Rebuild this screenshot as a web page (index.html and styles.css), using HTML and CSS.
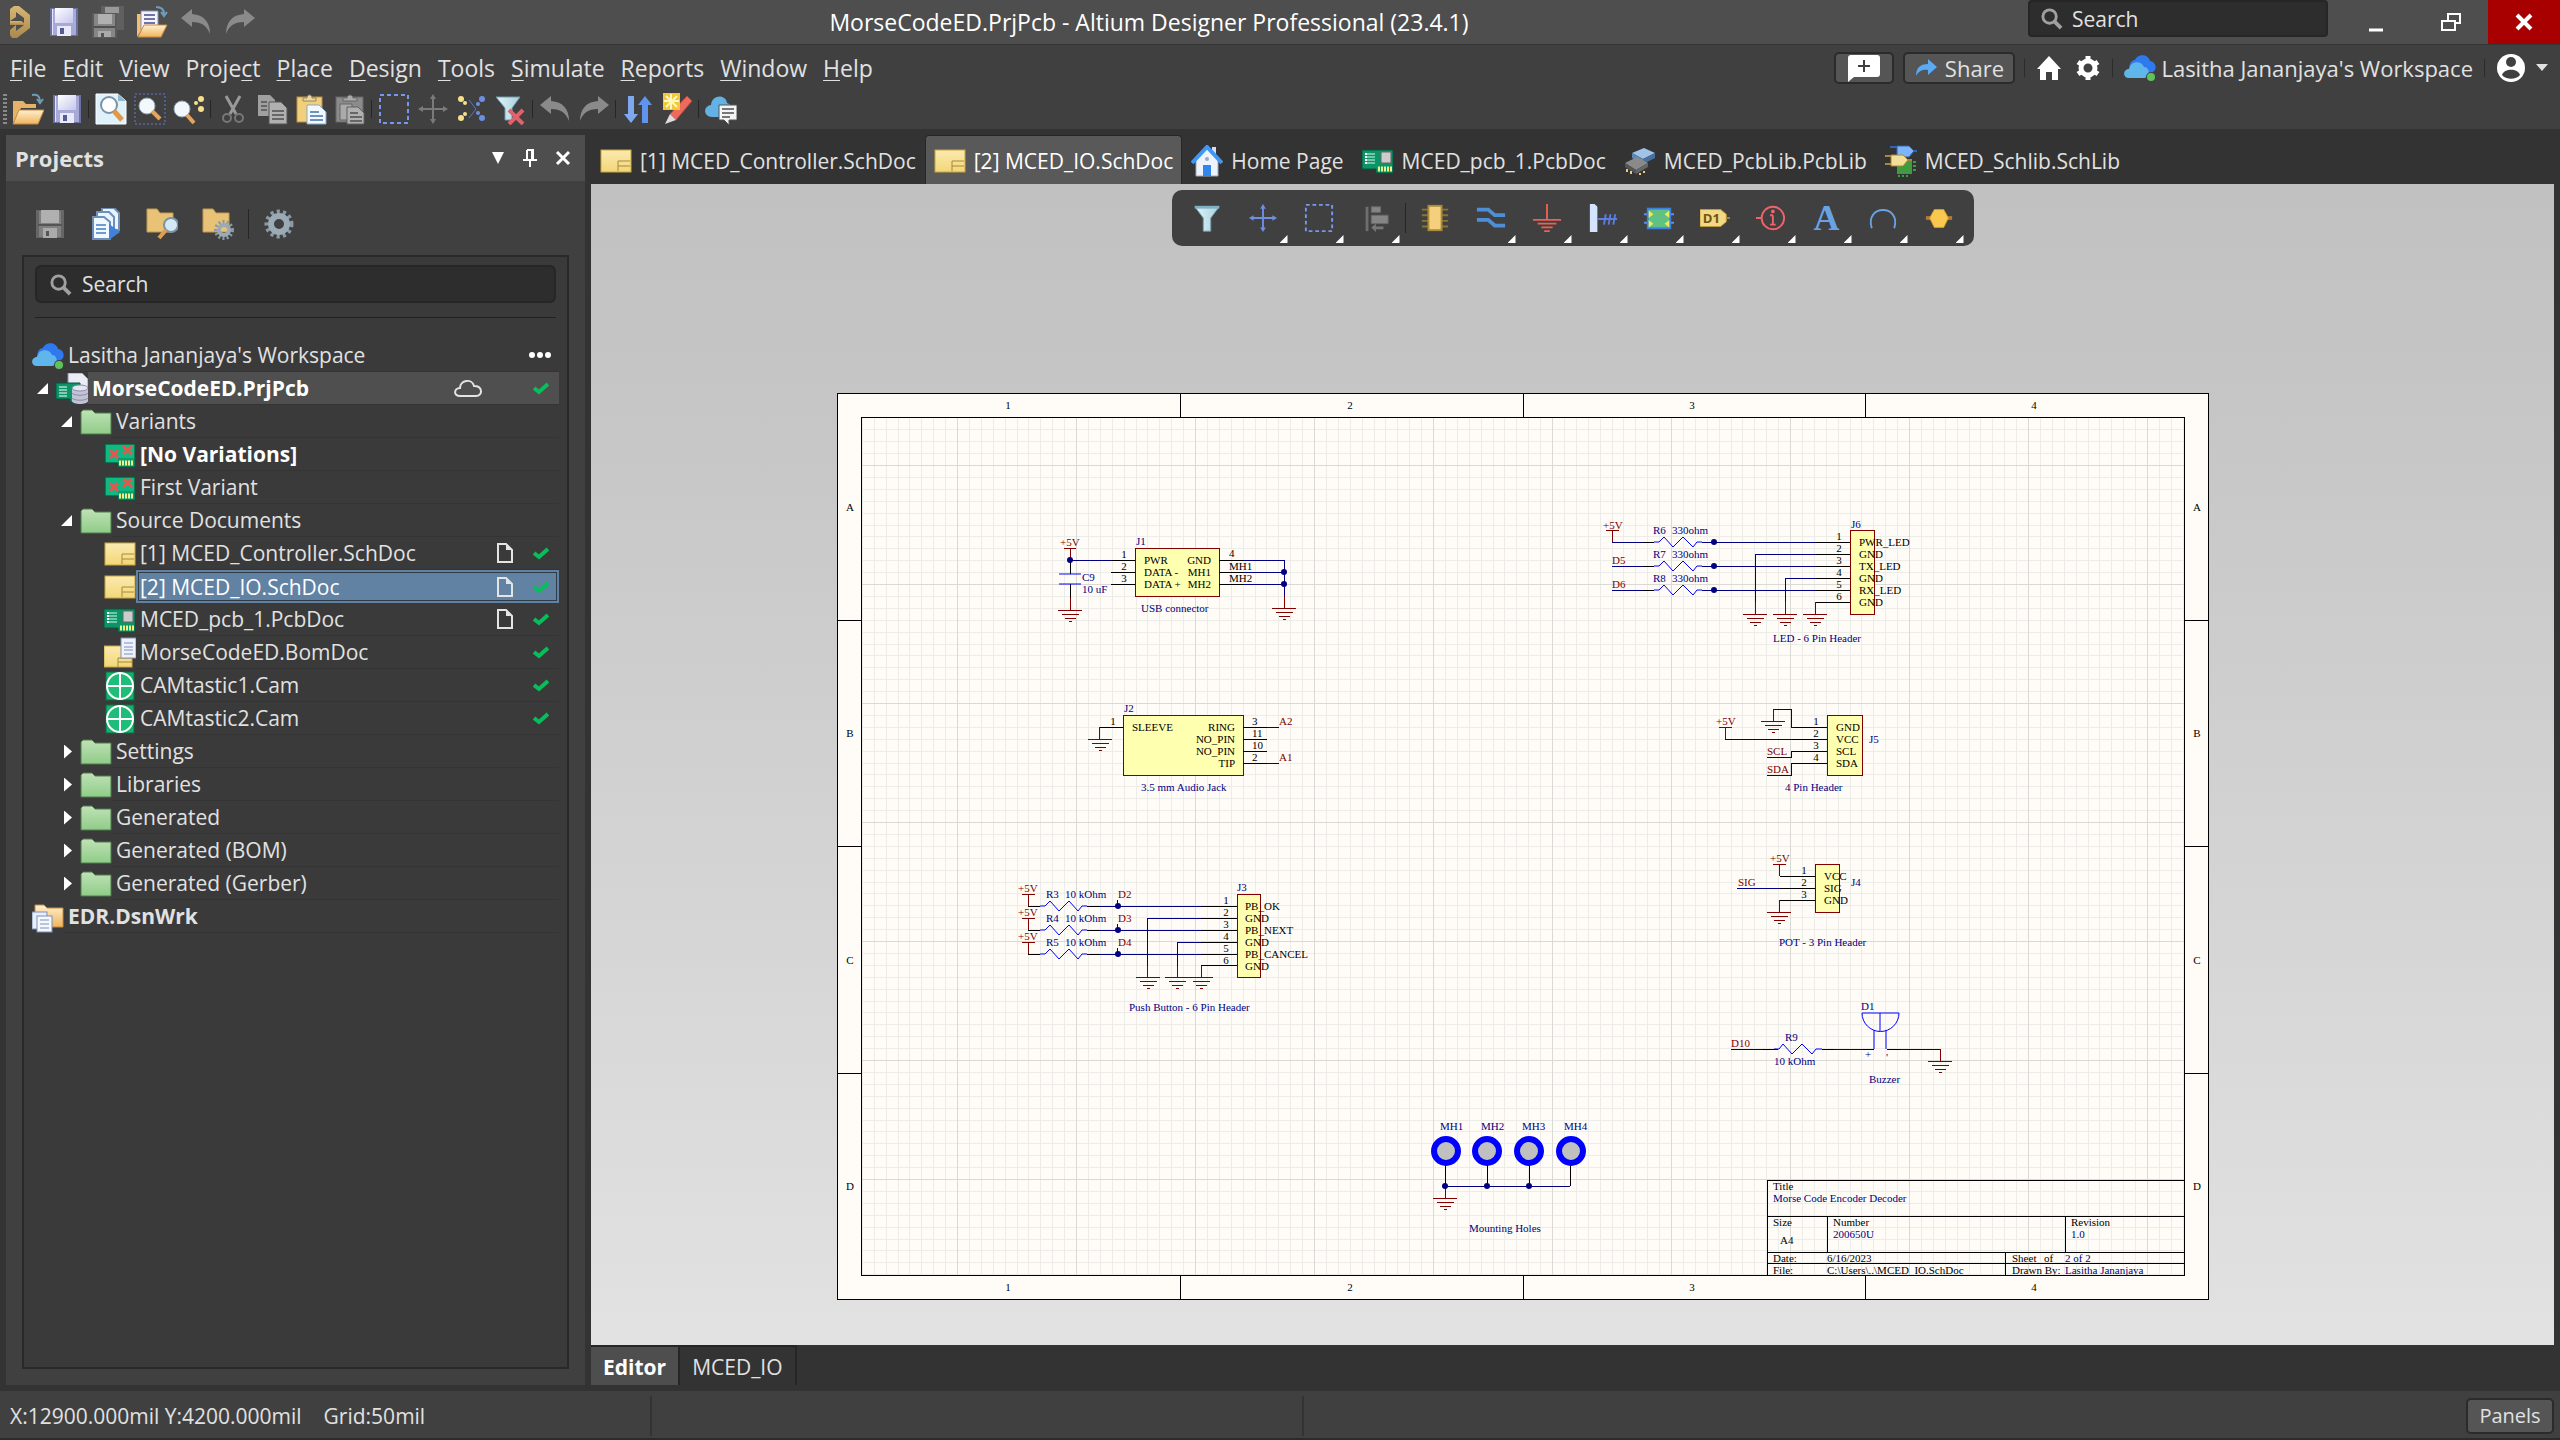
FILE: index.html
```html
<!DOCTYPE html>
<html lang="en">
<head>
<meta charset="utf-8">
<title>MorseCodeED.PrjPcb - Altium Designer Professional (23.4.1)</title>
<link rel="stylesheet" href="styles.css">
</head>
<body>
<svg class="defs" aria-hidden="true">
  <defs>
    <linearGradient id="gold" x1="0" y1="0" x2="0" y2="1"><stop offset="0" stop-color="#fff0cf"/><stop offset="1" stop-color="#f0b45e"/></linearGradient>
    <linearGradient id="note" x1="0" y1="0" x2="0" y2="1"><stop offset="0" stop-color="#fbeab0"/><stop offset="1" stop-color="#f2d777"/></linearGradient>
    <linearGradient id="leaf" x1="0" y1="0" x2="0" y2="1"><stop offset="0" stop-color="#c0e2b6"/><stop offset="1" stop-color="#8fcc88"/></linearGradient>
    <linearGradient id="lilac" x1="0" y1="0" x2="1" y2="1"><stop offset="0" stop-color="#ffffff"/><stop offset="1" stop-color="#c6c6ee"/></linearGradient>
    <linearGradient id="ice" x1="0" y1="0" x2="1" y2="0"><stop offset="0" stop-color="#dff3f8"/><stop offset="1" stop-color="#a8d2de"/></linearGradient>
    <linearGradient id="brass" x1="0" y1="0" x2="0" y2="1"><stop offset="0" stop-color="#d8b774"/><stop offset="1" stop-color="#a98a4c"/></linearGradient>
  </defs>
  <symbol id="i-logo" viewBox="0 0 32 32"><path d="M10 0 L15 0 L26 9 V22 L13 32 H8 L6 29 V24 L12 19 V25 L20 19 V12 L12 6 V11 L6 15 V3Z" fill="url(#brass)"/><path d="M6 15 H17 L20 17 V19 H6Z" fill="url(#brass)"/></symbol>
  <symbol id="i-save" viewBox="0 0 32 32"><path d="M2 2H30V30H2Z" fill="#6a70a0"/><path d="M4 3H28V29H4Z" fill="#a7aad6"/><rect x="7" y="2" width="18" height="15" fill="url(#lilac)"/><rect x="4" y="3" width="1" height="26" fill="#e4e4fa"/><rect x="9" y="20" width="14" height="10" fill="#e9e9fb"/><rect x="12" y="22" width="4" height="6" fill="#555c90"/></symbol>
  <symbol id="i-save-grey" viewBox="0 0 32 32"><path d="M2 2H30V30H2Z" fill="#666"/><path d="M5 3H27V29H5Z" fill="#808080"/><rect x="7" y="2" width="18" height="13" fill="#b0b0b0"/><rect x="4" y="16" width="24" height="2" fill="#555"/><rect x="9" y="20" width="14" height="10" fill="#aaa"/><rect x="12" y="23" width="3" height="5" fill="#555"/></symbol>
  <symbol id="i-save-all" viewBox="0 0 32 32"><path d="M9 0H32V24H9Z" fill="#606060"/><rect x="13" y="1" width="14" height="6" fill="#999"/><path d="M0 7H25V32H0Z" fill="#5a5a5a"/><path d="M2 8H23V31H2Z" fill="#868686"/><rect x="6" y="8" width="14" height="10" fill="#b0b0b0"/><rect x="2" y="20" width="21" height="2" fill="#505050"/><rect x="6" y="25" width="13" height="6" fill="#aaa"/><rect x="9" y="27" width="3" height="4" fill="#555"/></symbol>
  <symbol id="i-open" viewBox="0 0 32 32"><path d="M1 8H11L14 11H24V15H9L1 30Z" fill="#e6b26a"/><path d="M7 17H32L26 31H1Z" fill="url(#gold)" stroke="#c78a3e"/><path d="M20 2C25 1 28 3 28 8M25 6L28 10L31 6" fill="none" stroke="#6f9dbb" stroke-width="2"/></symbol>
  <symbol id="i-open-doc" viewBox="0 0 32 32"><path d="M1 8H8V20L1 31Z" fill="#f0c070"/><path d="M5 5H22V24H5Z" fill="#f4f4ff" stroke="#8c8fb5"/><path d="M8 9H19M8 13H19M8 17H19" stroke="#6f74a8" stroke-width="2"/><path d="M8 19H31L25 31H2Z" fill="url(#gold)" stroke="#c78a3e"/><path d="M20 1C25 1 28 3 28 8M25 6L28 10L31 6" fill="none" stroke="#6f9dbb" stroke-width="2"/></symbol>
  <symbol id="i-undo" viewBox="0 0 32 32"><path d="M1 12L12 3V8C24 9 30 16 30 28C27 20 22 16 12 16V21Z" fill="#8a8a8a"/></symbol>
  <symbol id="i-redo" viewBox="0 0 32 32"><path d="M31 12L20 3V8C8 9 2 16 2 28C5 20 10 16 20 16V21Z" fill="#8a8a8a"/></symbol>
  <symbol id="i-zoomdoc" viewBox="0 0 32 32"><path d="M1 1H23L31 8V31H1Z" fill="#dff2fb" stroke="#fff"/><path d="M23 1V8H31Z" fill="#8fb8cc"/><circle cx="14" cy="12" r="8" fill="#fff" stroke="#7a93a6" stroke-width="2"/><path d="M19 18L27 27" stroke="#e0994a" stroke-width="5"/></symbol>
  <symbol id="i-zoomarea" viewBox="0 0 32 32"><rect x="1" y="1" width="30" height="30" fill="none" stroke="#5f78d8" stroke-dasharray="2 2"/><circle cx="13" cy="13" r="8" fill="#f3f8fc" stroke="#8fa6b5"/><path d="M18 18L26 26" stroke="#e6a45a" stroke-width="4"/></symbol>
  <symbol id="i-zoomsel" viewBox="0 0 32 32"><circle cx="9" cy="16" r="8" fill="#f3f8fc" stroke="#8fa6b5"/><path d="M14 22L21 30" stroke="#e6a45a" stroke-width="4"/><g fill="#f6e08a"><circle cx="28" cy="6" r="3"/><circle cx="23" cy="10" r="2"/><circle cx="28" cy="16" r="3"/></g></symbol>
  <symbol id="i-cut" viewBox="0 0 32 32"><path d="M9 3L19 21M23 3L13 21" stroke="#999" stroke-width="3"/><circle cx="10" cy="25" r="4" fill="none" stroke="#777" stroke-width="2"/><circle cx="22" cy="25" r="4" fill="none" stroke="#777" stroke-width="2"/></symbol>
  <symbol id="i-copy" viewBox="0 0 32 32"><path d="M2 2H14L19 7V23H2Z" fill="#a0a0a0"/><path d="M13 9H25L31 15V31H13Z" fill="#b0b0b0" stroke="#555"/><path d="M5 9H11M5 13H11M5 17H11M16 18H28M16 22H28M16 26H28" stroke="#666" stroke-width="2"/></symbol>
  <symbol id="i-paste" viewBox="0 0 32 32"><rect x="2" y="4" width="25" height="25" fill="#f2cf7a" stroke="#b98f45"/><path d="M8 8V5H12C12 1 17 1 17 5H21V8Z" fill="#ead9a6" stroke="#9a8450"/><path d="M12 12H24L31 19V31H12Z" fill="#f2f8ff" stroke="#89a7c6"/><path d="M15 19H24M15 23H28M15 27H28" stroke="#6c92bd" stroke-width="2"/></symbol>
  <symbol id="i-paste-grey" viewBox="0 0 32 32"><rect x="2" y="4" width="27" height="25" fill="#8b8b8b" stroke="#666"/><path d="M9 8V5H13C13 1 19 1 19 5H23V8Z" fill="#aaa" stroke="#666"/><path d="M6 11H18V27H6Z" fill="#aaa" stroke="#666"/><path d="M13 14H24L30 20V31H13Z" fill="#b0b0b0" stroke="#606060"/><path d="M16 20H24M16 24H28M16 28H28" stroke="#666" stroke-width="2"/></symbol>
  <symbol id="i-select" viewBox="0 0 32 32"><rect x="2" y="2" width="28" height="28" fill="none" stroke="#7797ee" stroke-width="2" stroke-dasharray="4 3"/></symbol>
  <symbol id="i-move" viewBox="0 0 32 32"><path d="M16 4V28M4 16H28" stroke="currentColor" stroke-width="2"/><path d="M16 1L19 6H13ZM16 31L19 26H13ZM1 16L6 13V19ZM31 16L26 13V19Z" fill="currentColor"/></symbol>
  <symbol id="i-dots" viewBox="0 0 32 32"><g fill="#f6e08a"><circle cx="5" cy="6" r="3"/><circle cx="9" cy="10" r="2"/><circle cx="5" cy="25" r="3"/><circle cx="9" cy="21" r="2"/></g><g fill="#6c8fe0"><circle cx="26" cy="6" r="3"/><circle cx="22" cy="11" r="2"/><circle cx="26" cy="25" r="3"/><circle cx="22" cy="20" r="2"/></g><path d="M13 7L20 16L13 25" fill="none" stroke="#5573c8"/></symbol>
  <symbol id="i-filter" viewBox="0 0 32 32"><path d="M3 4H29L20 16V30H12V16Z" fill="url(#ice)" stroke="#6f9bad"/><rect x="3" y="3" width="26" height="3" fill="#7fb0c6"/></symbol>
  <symbol id="i-filter-clear" viewBox="0 0 32 32"><path d="M1 4H25L17 15V27H10V15Z" fill="url(#ice)" stroke="#6f9bad"/><path d="M14 17L28 31M28 17L14 31" stroke="#e0626a" stroke-width="4"/></symbol>
  <symbol id="i-arrows" viewBox="0 0 32 32"><path d="M6 3H12V21H16L9 30L2 21H6Z" fill="#7fa9ef"/><path d="M20 30H26V12H30L23 3L16 12H20Z" fill="#5f93ee"/></symbol>
  <symbol id="i-pen" viewBox="0 0 32 32"><path d="M26 3L31 8L15 27L9 21Z" fill="#ee6a5c" stroke="#b8443c"/><path d="M9 21L15 27L4 31Z" fill="#ddd"/><rect x="2" y="0" width="17" height="17" fill="#f0c83a"/><path d="M10 1V16M3 8H18M5 3L16 14M16 3L5 14" stroke="#fff6c0" stroke-width="2"/></symbol>
  <symbol id="i-cloudnote" viewBox="0 0 32 32"><path d="M7 24C-2 24-2 13 6 12C7 1 21 1 22 10C29 12 29 24 20 24Z" fill="#63b1e5"/><path d="M14 12H32V27H24V32L19 27H14Z" fill="#f4f4f4" stroke="#555"/><path d="M17 16H29M17 20H29M17 24H25" stroke="#777" stroke-width="2"/></symbol>
  <symbol id="i-cloud" viewBox="0 0 32 32"><path d="M6 18C4 12 8 8 11 8C13 2 24 1 26 9C30 9 33 14 31 18L27 22H8Z" fill="#2f79ee"/><path d="M5 26C-2 26-1 17 5 17C7 8 18 9 20 15C26 15 27 26 20 26Z" fill="#5fb6ea"/><circle cx="27" cy="25" r="5" fill="#404040"/><circle cx="27" cy="25" r="4" fill="#5ec45a"/></symbol>
  <symbol id="i-search" viewBox="0 0 24 24"><circle cx="10" cy="10" r="7" fill="none" stroke="#a0a0a0" stroke-width="3"/><path d="M15 15L22 22" stroke="#a0a0a0" stroke-width="4"/></symbol>
  <symbol id="i-folder" viewBox="0 0 32 32"><path d="M1 6L3 4H12L15 7H31V28H1Z" fill="url(#leaf)" stroke="#4f7a4c"/></symbol>
  <symbol id="i-sch" viewBox="0 0 32 32"><rect x="1" y="5" width="30" height="22" fill="url(#note)" stroke="#c9a640"/><path d="M30 16H18V26M18 21H30" fill="none" stroke="#a8883a"/></symbol>
  <symbol id="i-variant" viewBox="0 0 32 32"><path d="M1 5H31V28H14V24H1Z" fill="#0b9d6c" stroke="#06573c"/><path d="M2 6H30V19H14V23H2Z" fill="#10b883"/><path d="M15 24H30" stroke="#eef08a" stroke-width="5" stroke-dasharray="2 1"/><path d="M6 11L14 19M14 11L6 19M19 7L28 15M28 7L19 15" stroke="#e8554c" stroke-width="3"/></symbol>
  <symbol id="i-pcb" viewBox="0 0 32 32"><path d="M0 5H31V28H14V24H0Z" fill="#0a9467" stroke="#04563c"/><path d="M4 9H13M4 12H13M4 15H13M4 18H13" stroke="#d8fbe9"/><path d="M4 8V20" stroke="#fff" stroke-width="2" stroke-dasharray="2 1"/><rect x="19" y="7" width="10" height="11" fill="#ccc" stroke="#666"/><path d="M16 24H30" stroke="#eef08a" stroke-width="5" stroke-dasharray="2 1"/></symbol>
  <symbol id="i-project" viewBox="0 0 32 32"><path d="M12 0H26L32 6V18H12Z" fill="#ececf6" stroke="#8c8fb5"/><path d="M0 10H24V29H14V26H0Z" fill="#0a9467" stroke="#04563c"/><path d="M3 14H11M3 17H11M3 20H11M3 23H11" stroke="#fff"/><path d="M16 16V28C16 32 32 32 32 28V16Z" fill="#c3c3d6"/><ellipse cx="24" cy="15" rx="8" ry="3" fill="#e6e6f2" stroke="#8c8cab"/><path d="M16 20C18 23 30 23 32 20M16 25C18 28 30 28 32 25" fill="none" stroke="#8c8cab"/></symbol>
  <symbol id="i-bom" viewBox="0 0 32 32"><rect x="0" y="9" width="28" height="21" fill="url(#note)" stroke="#c9a640"/><path d="M28 21H14V30M14 25H28" fill="none" stroke="#a8883a"/><rect x="17" y="1" width="15" height="20" fill="#eef2fb" stroke="#8790b0"/><path d="M20 6H29M20 10H29M20 13H29M20 17H29" stroke="#7f8fc0"/></symbol>
  <symbol id="i-cam" viewBox="0 0 32 32"><rect x="2" y="2" width="28" height="28" fill="#15b06c" stroke="#0b6e43"/><circle cx="16" cy="16" r="13" fill="#1fbd79" stroke="#fff" stroke-width="2"/><path d="M16 3V29M3 16H29" stroke="#fff" stroke-width="2"/></symbol>
  <symbol id="i-workspace" viewBox="0 0 32 32"><path d="M3 4H12L15 7H31V26H3Z" fill="url(#gold)" stroke="#c78a3e"/><rect x="0" y="11" width="15" height="17" fill="#e8eefb" stroke="#7d8fb5"/><rect x="5" y="15" width="15" height="16" fill="#f4f8ff" stroke="#7d8fb5"/><path d="M8 19H17M8 23H17M8 27H17" stroke="#7f8fc0"/></symbol>
  <symbol id="i-check" viewBox="0 0 16 16"><path d="M1 8L6 12L15 4" fill="none" stroke="#06bf5a" stroke-width="4"/></symbol>
  <symbol id="i-page" viewBox="0 0 16 20"><path d="M1 1H9L15 7V19H1Z" fill="none" stroke="#e4e4e4" stroke-width="2"/><path d="M9 1V7H15Z" fill="#e4e4e4"/></symbol>
  <symbol id="i-gear" viewBox="0 0 32 32"><circle cx="16" cy="16" r="12" fill="none" stroke="#8b9aa4" stroke-width="5" stroke-dasharray="3 3"/><circle cx="16" cy="16" r="8" fill="none" stroke="#9aabb5" stroke-width="6"/></symbol>
</svg>

<header class="titlebar">
  <div class="quick">
    <svg class="ico"><use href="#i-logo"/></svg>
    <button class="tool" aria-label="Save"><svg class="ico"><use href="#i-save"/></svg></button>
    <button class="tool" aria-label="Save all"><svg class="ico"><use href="#i-save-all"/></svg></button>
    <button class="tool" aria-label="Open project"><svg class="ico"><use href="#i-open-doc"/></svg></button>
    <button class="tool" aria-label="Undo"><svg class="ico"><use href="#i-undo"/></svg></button>
    <button class="tool" aria-label="Redo"><svg class="ico"><use href="#i-redo"/></svg></button>
  </div>
  <h1 class="app-title">MorseCodeED.PrjPcb - Altium Designer Professional (23.4.1)</h1>
  <div class="window-side">
    <label class="search search-top"><svg class="search-ico"><use href="#i-search"/></svg><input type="text" placeholder="Search" aria-label="Search"></label>
    <div class="window-buttons">
      <button class="win" aria-label="Minimize"><svg width="20" height="20" viewBox="0 0 20 20"><path d="M3 18H17" stroke="#fff" stroke-width="3"/></svg></button>
      <button class="win" aria-label="Restore"><svg width="20" height="20" viewBox="0 0 20 20"><path d="M7 8V2H19V11H14M1 9H14V18H1Z" fill="none" stroke="#fff" stroke-width="2"/></svg></button>
      <button class="win win-close" aria-label="Close"><svg width="20" height="20" viewBox="0 0 20 20"><path d="M3 3L17 17M17 3L3 17" stroke="#fff" stroke-width="4"/></svg></button>
    </div>
  </div>
</header>

<div class="menurow">
  <nav class="menu">
    <a href="#"><u>F</u>ile</a><a href="#"><u>E</u>dit</a><a href="#"><u>V</u>iew</a><a href="#">Proje<u>c</u>t</a><a href="#"><u>P</u>lace</a><a href="#"><u>D</u>esign</a><a href="#"><u>T</u>ools</a><a href="#"><u>S</u>imulate</a><a href="#"><u>R</u>eports</a><a href="#"><u>W</u>indow</a><a href="#"><u>H</u>elp</a>
  </nav>
  <div class="account">
    <button class="raised comment" aria-label="Comment"><svg width="34" height="28" viewBox="0 0 34 28"><path d="M4 1H30Q33 1 33 4V20Q33 23 30 23H7L1 28V4Q1 1 4 1Z" fill="#fff"/><path d="M17 6V18M11 12H23" stroke="#404040" stroke-width="2"/></svg></button>
    <button class="raised share"><svg width="22" height="20" viewBox="0 0 22 20"><path d="M13 1L22 9L13 17V12C7 11 4 13 1 18C1 10 5 6 13 6Z" fill="#5aaaf6"/></svg>Share</button>
    <span class="vline"></span>
    <button class="plain" aria-label="Home"><svg width="26" height="26" viewBox="0 0 26 26"><path d="M13 1L25 14H22V25H16V17H10V25H4V14H1Z" fill="#fff"/></svg></button>
    <button class="plain" aria-label="Settings"><svg width="26" height="26" viewBox="0 0 26 26"><circle cx="13" cy="13" r="7" fill="none" stroke="#fff" stroke-width="5"/><path d="M13 1V5M13 21V25M3 7L6 9M20 17L23 19M23 7L20 9M6 17L3 19" stroke="#fff" stroke-width="5"/></svg></button>
    <span class="vline"></span>
    <button class="plain space"><svg class="ico"><use href="#i-cloud"/></svg>Lasitha Jananjaya's Workspace</button>
    <span class="vline"></span>
    <button class="plain user" aria-label="Account"><svg width="30" height="30" viewBox="0 0 30 30"><circle cx="15" cy="15" r="14" fill="#fff"/><circle cx="15" cy="9" r="5" fill="#404040"/><path d="M6 22C8 15 22 15 24 22C20 27 10 27 6 22Z" fill="#404040"/></svg><span class="caret"></span></button>
  </div>
</div>

<div class="toolbar">
  <button class="tool" aria-label="Open"><svg class="ico"><use href="#i-open"/></svg></button>
  <button class="tool" aria-label="Save"><svg class="ico"><use href="#i-save"/></svg></button>
  <span class="sep"></span>
  <button class="tool" aria-label="Fit document"><svg class="ico"><use href="#i-zoomdoc"/></svg></button>
  <button class="tool" aria-label="Zoom area"><svg class="ico"><use href="#i-zoomarea"/></svg></button>
  <button class="tool" aria-label="Zoom selected"><svg class="ico"><use href="#i-zoomsel"/></svg></button>
  <span class="sep"></span>
  <button class="tool" aria-label="Cut"><svg class="ico"><use href="#i-cut"/></svg></button>
  <button class="tool" aria-label="Copy"><svg class="ico"><use href="#i-copy"/></svg></button>
  <button class="tool" aria-label="Paste"><svg class="ico"><use href="#i-paste"/></svg></button>
  <button class="tool" aria-label="Smart paste"><svg class="ico"><use href="#i-paste-grey"/></svg></button>
  <span class="sep"></span>
  <button class="tool" aria-label="Select"><svg class="ico"><use href="#i-select"/></svg></button>
  <button class="tool dim" aria-label="Move"><svg class="ico"><use href="#i-move"/></svg></button>
  <button class="tool" aria-label="Deselect"><svg class="ico"><use href="#i-dots"/></svg></button>
  <button class="tool" aria-label="Clear filter"><svg class="ico"><use href="#i-filter-clear"/></svg></button>
  <span class="sep"></span>
  <button class="tool" aria-label="Undo"><svg class="ico"><use href="#i-undo"/></svg></button>
  <button class="tool" aria-label="Redo"><svg class="ico"><use href="#i-redo"/></svg></button>
  <span class="sep"></span>
  <button class="tool" aria-label="Up and down hierarchy"><svg class="ico"><use href="#i-arrows"/></svg></button>
  <button class="tool" aria-label="Cross probe"><svg class="ico"><use href="#i-pen"/></svg></button>
  <span class="sep"></span>
  <button class="tool" aria-label="Comments"><svg class="ico"><use href="#i-cloudnote"/></svg></button>
</div>

<main class="work">
  <aside class="panel">
    <div class="panel-head">
      <h2>Projects</h2>
      <button class="plain" aria-label="Options"><svg width="14" height="12" viewBox="0 0 14 12"><path d="M1 0H13L7 12Z" fill="#fff"/></svg></button>
      <button class="plain" aria-label="Pin"><svg width="14" height="18" viewBox="0 0 14 18"><path d="M4 1V11M4 1H10V11M0 11H14M7 11V18" fill="none" stroke="#fff" stroke-width="2"/><path d="M8 1H10V11H8Z" fill="#fff"/></svg></button>
      <button class="plain" aria-label="Close panel"><svg width="16" height="16" viewBox="0 0 16 16"><path d="M2 2L14 14M14 2L2 14" stroke="#fff" stroke-width="3"/></svg></button>
    </div>
    <div class="panel-tools">
      <button aria-label="Save"><svg class="ico"><use href="#i-save-grey"/></svg></button>
      <button aria-label="Compile"><svg class="ico" viewBox="0 0 32 32"><path d="M12 0H24L29 5V22H12Z" fill="#eaf4ff" stroke="#6d8fb8" stroke-width="2"/><path d="M7 4H19L24 9V26H7Z" fill="#eaf4ff" stroke="#6d8fb8" stroke-width="2"/><path d="M3 9H14L20 14V31H3Z" fill="#f2f8ff" stroke="#6d8fb8" stroke-width="2"/><path d="M6 17H16M6 21H16M6 25H16" stroke="#6d9cd4" stroke-width="2"/><path d="M19 16L30 24L19 32Z" fill="#3f83d8"/></svg></button>
      <button aria-label="Explore"><svg class="ico" viewBox="0 0 32 32"><path d="M1 1H11L14 5H27V24H1Z" fill="#e8c277" stroke="#c39a4c"/><circle cx="25" cy="17" r="7" fill="#d3e9f6" stroke="#7a93a6" stroke-width="2"/><path d="M20 22L13 30" stroke="#dba052" stroke-width="4"/></svg></button>
      <button aria-label="Project options"><svg class="ico" viewBox="0 0 32 32"><path d="M1 1H11L14 5H27V24H1Z" fill="#e8c277" stroke="#c39a4c"/><circle cx="22" cy="22" r="8" fill="none" stroke="#8b9aa4" stroke-width="4" stroke-dasharray="2 2"/><circle cx="22" cy="22" r="5" fill="none" stroke="#9aabb5" stroke-width="4"/></svg></button>
      <span class="sep"></span>
      <button aria-label="Settings"><svg class="ico"><use href="#i-gear"/></svg></button>
    </div>
    <div class="panel-box">
      <label class="search"><svg class="search-ico"><use href="#i-search"/></svg><input type="text" placeholder="Search" aria-label="Search projects"></label>
      <hr>
      <ul class="tree">
        <li class="l0"><svg class="ico"><use href="#i-cloud"/></svg><span class="cell"><span class="name">Lasitha Jananjaya's Workspace</span><svg class="dots" viewBox="0 0 24 8"><circle cx="4" cy="4" r="3"/><circle cx="12" cy="4" r="3"/><circle cx="20" cy="4" r="3"/></svg></span></li>
        <li class="l1 open"><i></i><svg class="ico"><use href="#i-project"/></svg><span class="cell lit"><span class="name strong">MorseCodeED.PrjPcb</span><svg class="cloud-line" viewBox="0 0 28 20"><path d="M6 18C-1 18 0 10 6 10C6 2 18 0 20 8C29 8 29 18 22 18Z" fill="none" stroke="#e4e4e4" stroke-width="2"/></svg><svg class="check"><use href="#i-check"/></svg></span></li>
        <li class="l2 open"><i></i><svg class="ico"><use href="#i-folder"/></svg><span class="cell"><span class="name">Variants</span></span></li>
        <li class="l3"><svg class="ico"><use href="#i-variant"/></svg><span class="cell"><span class="name strong">[No Variations]</span></span></li>
        <li class="l3"><svg class="ico"><use href="#i-variant"/></svg><span class="cell"><span class="name">First Variant</span></span></li>
        <li class="l2 open"><i></i><svg class="ico"><use href="#i-folder"/></svg><span class="cell"><span class="name">Source Documents</span></span></li>
        <li class="l3"><svg class="ico"><use href="#i-sch"/></svg><span class="cell"><span class="name">[1] MCED_Controller.SchDoc</span><svg class="page"><use href="#i-page"/></svg><svg class="check"><use href="#i-check"/></svg></span></li>
        <li class="l3"><svg class="ico"><use href="#i-sch"/></svg><span class="cell selected"><span class="name">[2] MCED_IO.SchDoc</span><svg class="page"><use href="#i-page"/></svg><svg class="check"><use href="#i-check"/></svg></span></li>
        <li class="l3"><svg class="ico"><use href="#i-pcb"/></svg><span class="cell"><span class="name">MCED_pcb_1.PcbDoc</span><svg class="page"><use href="#i-page"/></svg><svg class="check"><use href="#i-check"/></svg></span></li>
        <li class="l3"><svg class="ico"><use href="#i-bom"/></svg><span class="cell"><span class="name">MorseCodeED.BomDoc</span><svg class="check"><use href="#i-check"/></svg></span></li>
        <li class="l3"><svg class="ico"><use href="#i-cam"/></svg><span class="cell"><span class="name">CAMtastic1.Cam</span><svg class="check"><use href="#i-check"/></svg></span></li>
        <li class="l3"><svg class="ico"><use href="#i-cam"/></svg><span class="cell"><span class="name">CAMtastic2.Cam</span><svg class="check"><use href="#i-check"/></svg></span></li>
        <li class="l2 shut"><i></i><svg class="ico"><use href="#i-folder"/></svg><span class="cell"><span class="name">Settings</span></span></li>
        <li class="l2 shut"><i></i><svg class="ico"><use href="#i-folder"/></svg><span class="cell"><span class="name">Libraries</span></span></li>
        <li class="l2 shut"><i></i><svg class="ico"><use href="#i-folder"/></svg><span class="cell"><span class="name">Generated</span></span></li>
        <li class="l2 shut"><i></i><svg class="ico"><use href="#i-folder"/></svg><span class="cell"><span class="name">Generated (BOM)</span></span></li>
        <li class="l2 shut"><i></i><svg class="ico"><use href="#i-folder"/></svg><span class="cell"><span class="name">Generated (Gerber)</span></span></li>
        <li class="l0"><svg class="ico"><use href="#i-workspace"/></svg><span class="cell"><span class="name heavy">EDR.DsnWrk</span></span></li>
      </ul>
    </div>
  </aside>

  <section class="docs">
    <nav class="tabs">
      <a href="#"><svg class="ico"><use href="#i-sch"/></svg>[1] MCED_Controller.SchDoc</a>
      <a href="#" class="active"><svg class="ico"><use href="#i-sch"/></svg>[2] MCED_IO.SchDoc</a>
      <a href="#"><svg class="ico" viewBox="0 0 32 32"><rect x="21" y="2" width="4" height="9" fill="#ddd"/><path d="M5 15L16 3L27 15V31H5Z" fill="#eef2fb" stroke="#9ab"/><path d="M1 18L16 2L31 18" fill="none" stroke="#3f97f5" stroke-width="4"/><rect x="12" y="20" width="8" height="11" fill="#2e86ee"/><circle cx="16" cy="14" r="2" fill="#9ab"/></svg>Home Page</a>
      <a href="#"><svg class="ico"><use href="#i-pcb"/></svg>MCED_pcb_1.PcbDoc</a>
      <a href="#"><svg class="ico" viewBox="0 0 32 32"><path d="M8 8L20 3L31 8L19 14Z" fill="#9fc4e8"/><path d="M8 8L19 14V19L8 13Z" fill="#5b87b8"/><path d="M31 8V13L19 19V14Z" fill="#47709e"/><path d="M1 18L13 12L24 18L12 25Z" fill="#8a8a8a"/><path d="M1 18L12 25V29L1 22Z" fill="#555"/><path d="M24 18V22L12 29V25Z" fill="#666"/><path d="M3 24V27M7 26V29M16 28V30M20 26V28" stroke="#e8cf78" stroke-width="2"/></svg>MCED_PcbLib.PcbLib</a>
      <a href="#"><svg class="ico" viewBox="0 0 32 32"><rect x="12" y="14" width="15" height="15" fill="#3f9b3f"/><path d="M14 30V32M18 30V32M22 30V32M28 17H31M28 21H31M28 25H31" stroke="#3f9b3f" stroke-width="2"/><path d="M12 1H24L29 6L24 12H12Z" fill="#7db4fa" stroke="#2e64b8"/><path d="M5 2H12M29 6H32" stroke="#2e64b8" stroke-width="2"/><path d="M6 10H18L23 15L18 21H6Z" fill="#f4df98" stroke="#a8883a"/><path d="M0 11H6M0 19H6M23 15H27" stroke="#a8883a" stroke-width="2"/></svg>MCED_Schlib.SchLib</a>
    </nav>

    <div class="canvas">
      <svg class="sheet" viewBox="591 184 1963 1161">
        <defs>
          <pattern id="grid" x="1076" y="584" width="119" height="119" patternUnits="userSpaceOnUse">
            <path fill="#ecede9" d="M12 0h1v119h-1zM24 0h1v119h-1zM36 0h1v119h-1zM48 0h1v119h-1zM60 0h1v119h-1zM71 0h1v119h-1zM83 0h1v119h-1zM95 0h1v119h-1zM107 0h1v119h-1zM0 12h119v1h-119zM0 24h119v1h-119zM0 36h119v1h-119zM0 48h119v1h-119zM0 60h119v1h-119zM0 71h119v1h-119zM0 83h119v1h-119zM0 95h119v1h-119zM0 107h119v1h-119z"/>
            <path fill="#d9dad6" d="M0 0h1v119h-1zM0 0h119v1h-119z"/>
          </pattern>
        </defs>
        <rect x="837" y="393" width="1372" height="907" fill="#fffcf7"/>
        <rect x="862" y="418" width="1322" height="857" fill="url(#grid)"/>
        <g class="frame">
          <rect x="837" y="393" width="1371" height="906"/><rect x="861" y="417" width="1323" height="858"/>
          <path d="M1180 393V417M1523 393V417M1865 393V417M1180 1275V1299M1523 1275V1299M1865 1275V1299M837 620H861M837 846H861M837 1073H861M2184 620H2208M2184 846H2208M2184 1073H2208"/>
          <rect x="1767" y="1180" width="417" height="95"/>
          <path d="M1767 1216H2184M1767 1252H2184M1767 1263H2184M1827 1216V1252M2065 1216V1252M2005 1252V1275"/>
        </g>
        <g class="t mid">
          <text x="1008" y="409">1</text><text x="1350" y="409">2</text><text x="1692" y="409">3</text><text x="2034" y="409">4</text>
          <text x="1008" y="1291">1</text><text x="1350" y="1291">2</text><text x="1692" y="1291">3</text><text x="2034" y="1291">4</text>
          <text x="850" y="511">A</text><text x="850" y="737">B</text><text x="850" y="964">C</text><text x="850" y="1190">D</text>
          <text x="2197" y="511">A</text><text x="2197" y="737">B</text><text x="2197" y="964">C</text><text x="2197" y="1190">D</text>
        </g>
        <g class="t">
          <text x="1773" y="1190">Title</text><text x="1773" y="1226">Size</text><text x="1780" y="1244">A4</text><text x="1833" y="1226">Number</text><text x="2071" y="1226">Revision</text>
          <text x="1773" y="1262">Date:</text><text x="1827" y="1262">6/16/2023</text><text x="2012" y="1262">Sheet</text><text x="2044" y="1262">of</text>
          <text x="1773" y="1274">File:</text><text x="1827" y="1274">C:\Users\..\MCED_IO.SchDoc</text><text x="2012" y="1274">Drawn By:</text>
        </g>
        <g class="t navy">
          <text x="1773" y="1202">Morse Code Encoder Decoder</text><text x="1833" y="1238">200650U</text><text x="2071" y="1238">1.0</text><text x="2065" y="1262">2 of 2</text><text x="2065" y="1274">Lasitha Jananjaya</text>
        </g>

        <g class="body">
          <rect x="1135" y="548" width="84" height="48"/><rect x="1123" y="715" width="120" height="60"/><rect x="1237" y="894" width="23" height="83"/>
          <rect x="1850" y="530" width="24" height="84"/><rect x="1827" y="715" width="35" height="60"/><rect x="1815" y="864" width="24" height="48"/>
        </g>
        <g class="pin">
          <path d="M1112 560H1135M1111 572H1135M1111 584H1135M1219 560H1243M1219 572H1243M1219 584H1243M1070 560V574M1070 584V598"/>
          <path d="M1100 727H1123M1243 727H1267M1243 739H1267M1243 751H1267M1243 763H1267"/>
          <path d="M1028 906H1040M1028 930H1040M1028 954H1040M1087 906H1100M1087 930H1100M1087 954H1100M1201 906H1237M1201 918H1237M1201 930H1237M1201 942H1237M1201 954H1237M1201 965H1237"/>
          <path d="M1643 542H1654M1643 566H1654M1643 590H1654M1816 542H1850M1816 554H1850M1816 566H1850M1816 578H1850M1816 590H1850M1816 602H1850"/>
          <path d="M1792 727H1827M1792 739H1827M1792 751H1827M1792 763H1827"/>
          <path d="M1780 876H1815M1780 888H1815M1780 900H1815"/>
          <path d="M1762 1049H1778M1822 1049H1834M1862 1049H1874M1887 1049H1900"/>
          <path d="M1445 1165V1186M1487 1165V1186M1529 1165V1186M1570 1165V1186"/>
        </g>
        <g class="wire">
          <path d="M1070 560H1112M1243 560H1284V596M1243 572H1284M1243 584H1284M1267 727H1279M1267 763H1279"/>
          <path d="M1100 906H1201M1100 930H1201M1100 954H1201M1117 900V906M1117 924V930M1117 948V954M1201 918H1147V966M1201 942H1177V966"/>
          <path d="M1612 542H1643M1612 566H1643M1612 590H1643M1702 542H1816M1702 566H1816M1702 590H1816M1816 554H1755V602M1816 578H1785V602"/>
          <path d="M1773 709H1791V727H1794M1725 739H1792M1767 757H1791V751M1767 775H1791V763"/>
          <path d="M1737 888H1780M1731 1049H1762M1834 1049H1862M1900 1049H1940M1445 1186H1570"/>
        </g>
        <g class="power">
          <path d="M1064 548H1076M1070 548V560M1070 598V610M1284 596V608M1099 727V739"/>
          <path d="M1022 894H1035M1028 894V906M1022 918H1035M1028 918V930M1022 942H1035M1028 942V954M1147 966V977M1177 966V977M1201 966V977"/>
          <path d="M1606 530H1619M1612 530V542M1755 602V614M1785 602V614M1815 602V614M1773 709V721M1719 727H1732M1725 727V739"/>
          <path d="M1773 864H1786M1779 864V876M1779 900V912M1940 1049V1061M1445 1186V1198"/>
          <path d="M1058 610h24m-20 4h17m-14 4h11m-7 3h3"/><path d="M1272 608h24m-20 4h17m-14 4h11m-7 3h3"/><path d="M1088 739h24m-20 4h17m-14 4h11m-7 3h3"/>
          <path d="M1136 977h24m-20 4h17m-14 4h11m-7 3h3"/><path d="M1165 977h24m-20 4h17m-14 4h11m-7 3h3"/><path d="M1189 977h24m-20 4h17m-14 4h11m-7 3h3"/>
          <path d="M1743 614h24m-20 4h17m-14 4h11m-7 3h3"/><path d="M1773 614h24m-20 4h17m-14 4h11m-7 3h3"/><path d="M1803 614h24m-20 4h17m-14 4h11m-7 3h3"/>
          <path d="M1761 721h24m-20 4h17m-14 4h11m-7 3h3"/><path d="M1767 912h24m-20 4h17m-14 4h11m-7 3h3"/><path d="M1928 1061h24m-20 4h17m-14 4h11m-7 3h3"/><path d="M1433 1198h24m-20 4h17m-14 4h11m-7 3h3"/>
        </g>
        <g class="part">
          <path d="M1059 574H1081M1059 584H1081"/>
          <path d="M1040 906h5l5-5l9 10l10-10l9 10l4-5h5M1040 930h5l5-5l9 10l10-10l9 10l4-5h5M1040 954h5l5-5l9 10l10-10l9 10l4-5h5"/>
          <path d="M1654 542h5l5-5l9 10l10-10l10 10l4-5h5M1654 566h5l5-5l9 10l10-10l10 10l4-5h5M1654 590h5l5-5l9 10l10-10l10 10l4-5h5"/>
          <path d="M1774 1049h5l4-5l9 10l10-10l10 10l4-5h6"/>
          <path d="M1862 1013H1899A18 18 0 0 1 1862 1013ZM1880 1013V1031M1874 1030V1049M1886 1030V1049"/>
        </g>
        <g class="node">
          <circle cx="1070" cy="560" r="3"/><circle cx="1284" cy="572" r="3"/><circle cx="1284" cy="584" r="3"/>
          <circle cx="1118" cy="906" r="3"/><circle cx="1118" cy="930" r="3"/><circle cx="1118" cy="954" r="3"/>
          <circle cx="1714" cy="542" r="3"/><circle cx="1714" cy="566" r="3"/><circle cx="1714" cy="590" r="3"/>
          <circle cx="1445" cy="1186" r="3"/><circle cx="1487" cy="1186" r="3"/><circle cx="1529" cy="1186" r="3"/>
        </g>
        <g class="hole"><circle cx="1446" cy="1151" r="12"/><circle cx="1487" cy="1151" r="12"/><circle cx="1529" cy="1151" r="12"/><circle cx="1571" cy="1151" r="12"/></g>

        <g class="t red">
          <text x="1060" y="546">+5V</text><text x="1018" y="892">+5V</text><text x="1018" y="916">+5V</text><text x="1018" y="940">+5V</text><text x="1603" y="529">+5V</text><text x="1716" y="725">+5V</text><text x="1770" y="862">+5V</text>
          <text x="1279" y="725">A2</text><text x="1279" y="761">A1</text><text x="1118" y="898">D2</text><text x="1118" y="922">D3</text><text x="1118" y="946">D4</text>
          <text x="1612" y="564">D5</text><text x="1612" y="588">D6</text><text x="1767" y="755">SCL</text><text x="1767" y="773">SDA</text><text x="1738" y="886">SIG</text><text x="1731" y="1047">D10</text>
        </g>
        <g class="t navy">
          <text x="1136" y="545">J1</text><text x="1082" y="581">C9</text><text x="1082" y="593">10 uF</text><text x="1141" y="612">USB connector</text>
          <text x="1124" y="712">J2</text><text x="1141" y="791">3.5 mm Audio Jack</text>
          <text x="1237" y="891">J3</text><text x="1046" y="898">R3</text><text x="1065" y="898">10 kOhm</text><text x="1046" y="922">R4</text><text x="1065" y="922">10 kOhm</text><text x="1046" y="946">R5</text><text x="1065" y="946">10 kOhm</text><text x="1129" y="1011">Push Button - 6 Pin Header</text>
          <text x="1851" y="528">J6</text><text x="1653" y="534">R6</text><text x="1672" y="534">330ohm</text><text x="1653" y="558">R7</text><text x="1672" y="558">330ohm</text><text x="1653" y="582">R8</text><text x="1672" y="582">330ohm</text><text x="1773" y="642">LED - 6 Pin Header</text>
          <text x="1869" y="743">J5</text><text x="1785" y="791">4 Pin Header</text><text x="1851" y="886">J4</text><text x="1779" y="946">POT - 3 Pin Header</text>
          <text x="1861" y="1010">D1</text><text x="1785" y="1041">R9</text><text x="1774" y="1065">10 kOhm</text><text x="1865" y="1058">+</text><text x="1886" y="1061">'</text><text x="1869" y="1083">Buzzer</text>
          <text x="1440" y="1130">MH1</text><text x="1481" y="1130">MH2</text><text x="1522" y="1130">MH3</text><text x="1564" y="1130">MH4</text><text x="1469" y="1232">Mounting Holes</text>
        </g>
        <g class="t">
          <text x="1144" y="564">PWR</text><text x="1144" y="576">DATA -</text><text x="1144" y="588">DATA +</text><text x="1229" y="557">4</text><text x="1229" y="570">MH1</text><text x="1229" y="582">MH2</text>
          <text x="1132" y="731">SLEEVE</text><text x="1252" y="725">3</text><text x="1252" y="737">11</text><text x="1252" y="749">10</text><text x="1252" y="761">2</text>
          <text x="1245" y="910">PB_OK</text><text x="1245" y="922">GND</text><text x="1245" y="934">PB_NEXT</text><text x="1245" y="946">GND</text><text x="1245" y="958">PB_CANCEL</text><text x="1245" y="970">GND</text>
          <text x="1859" y="546">PWR_LED</text><text x="1859" y="558">GND</text><text x="1859" y="570">TX_LED</text><text x="1859" y="582">GND</text><text x="1859" y="594">RX_LED</text><text x="1859" y="606">GND</text>
          <text x="1836" y="731">GND</text><text x="1836" y="743">VCC</text><text x="1836" y="755">SCL</text><text x="1836" y="767">SDA</text>
          <text x="1824" y="880">VCC</text><text x="1824" y="892">SIG</text><text x="1824" y="904">GND</text>
        </g>
        <g class="t end">
          <text x="1211" y="564">GND</text><text x="1211" y="576">MH1</text><text x="1211" y="588">MH2</text><text x="1235" y="731">RING</text><text x="1235" y="743">NO_PIN</text><text x="1235" y="755">NO_PIN</text><text x="1235" y="767">TIP</text>
        </g>
        <g class="t mid">
          <text x="1124" y="558">1</text><text x="1124" y="570">2</text><text x="1124" y="582">3</text><text x="1113" y="725">1</text>
          <text x="1226" y="904">1</text><text x="1226" y="916">2</text><text x="1226" y="928">3</text><text x="1226" y="940">4</text><text x="1226" y="952">5</text><text x="1226" y="964">6</text>
          <text x="1839" y="540">1</text><text x="1839" y="552">2</text><text x="1839" y="564">3</text><text x="1839" y="576">4</text><text x="1839" y="588">5</text><text x="1839" y="600">6</text>
          <text x="1816" y="725">1</text><text x="1816" y="737">2</text><text x="1816" y="749">3</text><text x="1816" y="761">4</text>
          <text x="1804" y="874">1</text><text x="1804" y="886">2</text><text x="1804" y="898">3</text>
        </g>
      </svg>

      <div class="activebar">
        <button aria-label="Filter"><svg class="ico"><use href="#i-filter"/></svg></button>
        <button class="more blue" aria-label="Move"><svg class="ico"><use href="#i-move"/></svg></button>
        <button class="more" aria-label="Selection"><svg class="ico"><use href="#i-select"/></svg></button>
        <button class="more" aria-label="Align"><svg class="ico" viewBox="0 0 32 32"><path d="M6 4H9V30H6Z" fill="#6e6e6e"/><path d="M12 4H22V10H12ZM12 13H30V22H12Z" fill="#858585" stroke="#666"/><path d="M12 26L17 22V25H25V28H17V31Z" fill="#777"/></svg></button>
        <span class="sep"></span>
        <button aria-label="Place part"><svg class="ico" viewBox="0 0 32 32"><path d="M2 7H30M2 13H30M2 19H30M2 25H30" stroke="#8a7430" stroke-width="2"/><rect x="9" y="3" width="14" height="26" fill="#f6cf7c" stroke="#a98a3c" stroke-width="2"/></svg></button>
        <button class="more" aria-label="Place wire"><svg class="ico" viewBox="0 0 32 32"><path d="M1 7H13L20 13H31M1 18H13L20 24H31" fill="none" stroke="#4d8fd6" stroke-width="4"/></svg></button>
        <button class="more" aria-label="Place ground"><svg class="ico" viewBox="0 0 32 32"><path d="M16 1V17M1 18H31M6 22H26M10 26H22M13 30H19" stroke="#ee5f55" stroke-width="2"/></svg></button>
        <button class="more" aria-label="Place harness"><svg class="ico" viewBox="0 0 32 32"><path d="M2 1H7L10 4V31H2Z" fill="#d4e4ff"/><path d="M10 17H17M17 17H31M19 12L17 23M24 12L22 23M29 12L27 23" stroke="#5b7fe0" stroke-width="2" fill="none"/></svg></button>
        <button class="more" aria-label="Place sheet symbol"><svg class="ico" viewBox="0 0 32 32"><path d="M0 12H4M0 21H4M28 12H32M28 21H32" stroke="#5a8ef0" stroke-width="2"/><rect x="4" y="6" width="24" height="21" fill="#5fc283" stroke="#3c7fe0" stroke-width="2"/><path d="M5 8L10 12L5 16ZM5 18L10 22L5 26ZM27 8L22 12L27 16ZM27 18L22 22L27 26Z" fill="#f2e95a"/></svg></button>
        <button class="more" aria-label="Place designator"><svg class="ico" viewBox="0 0 32 32"><path d="M0 7H22L28 12V20L22 25H0Z" fill="#f3d983" stroke="#c49d3c"/><path d="M28 16H32" stroke="#a8883a" stroke-width="2"/><text x="3" y="21" class="tag">D1</text></svg></button>
        <button class="more" aria-label="Place directive"><svg class="ico" viewBox="0 0 32 32"><circle cx="18" cy="16" r="12" fill="none" stroke="#ee6468" stroke-width="2"/><path d="M0 16H6M18 13V23M15 23H21M15 13H18" stroke="#ee6468" stroke-width="2"/><circle cx="18" cy="9" r="2" fill="#ee6468"/></svg></button>
        <button class="more letter" aria-label="Place text">A</button>
        <button class="more" aria-label="Place arc"><svg class="ico" viewBox="0 0 32 32"><path d="M4 27C-4 1 36 1 28 27" fill="none" stroke="#69a3e6" stroke-width="2"/></svg></button>
        <button class="more" aria-label="Place port"><svg class="ico" viewBox="0 0 32 32"><path d="M2 16H30" stroke="#b07a35" stroke-width="4"/><path d="M11 7H21L26 16L21 26H11L6 16Z" fill="#f8c94e" stroke="#d69a2c"/></svg></button>
      </div>
    </div>

    <nav class="sheet-tabs"><a href="#" class="current">Editor</a><a href="#">MCED_IO</a></nav>
  </section>
</main>

<footer class="status">
  <span class="coords"><span>X:12900.000mil Y:4200.000mil</span><span>Grid:50mil</span></span>
  <span class="message"></span>
  <span class="rest"><button class="raised">Panels</button></span>
</footer>
</body>
</html>
```
FILE: styles.css
```css
* { box-sizing: border-box; }
html, body { height: 100%; }
body {
  margin: 0;
  display: flex;
  flex-direction: column;
  background: #333;
  color: #e1e1e1;
  font: 21px/28px "Open Sans", "Noto Sans", sans-serif;
  overflow: hidden;
}
a { color: inherit; text-decoration: none; }
button { margin: 0; padding: 0; border: 0; background: none; color: inherit; font: inherit; }
.defs { position: absolute; width: 0; height: 0; }
.ico { width: 32px; height: 32px; flex: none; display: block; }

/* title bar */
.titlebar {
  display: grid;
  grid-template-columns: 1fr auto 1fr;
  height: 45px;
  background: #4e4e4e;
  border-bottom: 1px solid #353535;
}
.quick { display: flex; align-items: center; gap: 12px; padding-left: 4px; }
.app-title { margin: 0; align-self: center; font-size: 23px; font-weight: 400; color: #fff; padding-right: 262px; white-space: nowrap; }
.window-side { display: flex; justify-content: flex-end; }
.search {
  display: flex;
  align-items: center;
  gap: 9px;
  height: 38px;
  padding: 0 14px;
  background: #2d2d2d;
  border: 2px solid #262626;
  border-radius: 6px;
}
.search-ico { width: 23px; height: 23px; flex: none; }
.search input { flex: 1; min-width: 0; padding: 0; border: 0; outline: 0; background: none; color: #e1e1e1; font: inherit; }
.search input::placeholder { color: #e1e1e1; opacity: 1; }
.search-top { width: 300px; height: 37px; padding: 0 10px; border-radius: 4px; }
.window-buttons { display: flex; padding-left: 10px; }
.win { width: 75px; display: grid; place-items: center; }
.win-close { width: 72px; background: #a80000; }

/* menu and account row */
.menurow { display: flex; justify-content: space-between; align-items: center; height: 43px; padding-top: 2px; background: #404040; font-size: 22px; }
.menu { display: flex; gap: 16px; padding-left: 10px; font-size: 23px; }
.menu u { text-decoration-thickness: 1px; text-underline-offset: 3px; }
.account { display: flex; align-items: center; gap: 9px; padding-right: 10px; }
.raised {
  display: flex;
  align-items: center;
  justify-content: center;
  gap: 8px;
  height: 32px;
  background: #555;
  border: 2px solid #2b2b2b;
  border-radius: 5px;
}
.comment { width: 60px; }
.share { width: 112px; }
.plain { display: flex; align-items: center; gap: 5px; }
.account .plain { margin: 0 2px; }
.vline { width: 1px; height: 18px; background: #2b2b2b; }
.user { gap: 10px; }
.caret { border: 6px solid transparent; border-top: 7px solid #e1e1e1; border-bottom: 0; }

/* main toolbar */
.toolbar { display: flex; align-items: center; height: 41px; padding-left: 3px; background: #404040; }
.toolbar::before { content: ""; width: 4px; height: 30px; background: repeating-linear-gradient(#8a8a8a 0 2px, transparent 2px 4px); border-right: 1px solid #404040; }
.tool { width: 39px; display: grid; place-items: center; }
.quick .tool { width: 32px; }
.sep { width: 5px; height: 18px; background: linear-gradient(90deg, transparent 2px, #262626 2px, #262626 3px, transparent 3px); }
.dim { color: #7a7a7a; }
.blue { color: #6f8fe2; }

/* work area */
.work { flex: 1; min-height: 0; display: flex; gap: 6px; padding: 6px; }
.panel { width: 579px; flex: none; display: flex; flex-direction: column; background: #404040; }
.panel-head { display: flex; align-items: center; gap: 18px; height: 46px; padding: 0 14px 0 9px; background: #4e4e4e; }
.panel-head h2 { margin: 0; flex: 1; font-size: 22px; font-weight: 700; }
.panel-tools { display: flex; align-items: center; height: 74px; padding: 12px 0 0 16px; }
.panel-tools button { width: 56px; display: grid; place-items: center; }
.panel-tools .sep { height: 30px; }
.panel-box { flex: 1; min-height: 0; margin: 0 16px 16px; padding: 8px 11px 0; background: #3a3a3a; border: 2px solid #292929; }
.panel-box hr { height: 1px; margin: 14px 0 21px; border: 0; background: #222; }
.panel-box .search { gap: 10px; padding: 0 12px; }

/* project tree */
.tree { list-style: none; margin: 0 -3px 0 -11px; padding: 0; }
.tree li { display: flex; align-items: center; height: 33px; }
.l0, .l1 { padding-left: 8px; }
.l2 { padding-left: 32px; }
.l3 { padding-left: 80px; }
.tree i { width: 24px; flex: none; padding-left: 5px; }
.tree i::before { content: ""; display: block; }
.open i::before { width: 11px; height: 11px; background: #fff; clip-path: polygon(100% 0, 100% 100%, 0 100%); }
.shut i::before { width: 8px; height: 14px; margin-left: 3px; background: #fff; clip-path: polygon(0 0, 100% 50%, 0 100%); }
.cell { flex: 1; min-width: 0; height: 33px; display: flex; align-items: center; gap: 20px; padding: 0 10px 0 4px; border-bottom: 1px solid #343434; }
.name { flex: 1; white-space: nowrap; }
.strong { font-weight: 700; color: #fff; }
.heavy { font-weight: 700; }
.lit { background: #4f4f4f; }
.selected { background: #6182a3; border: 1px solid #6182a3; outline: 1px solid #2f3b47; outline-offset: -3px; color: #fff; padding: 0 9px 0 3px; }
.check { width: 16px; height: 16px; }
.page { width: 16px; height: 20px; }
.cloud-line { width: 28px; height: 20px; margin-right: 31px; }
.dots { width: 24px; height: 8px; margin-right: -3px; fill: #fff; }

/* document area */
.docs { flex: 1; min-width: 0; display: flex; flex-direction: column; }
.tabs { display: flex; height: 49px; }
.tabs a { display: flex; align-items: center; gap: 8px; padding: 2px 8px 0 8px; border: 1px solid transparent; border-bottom: 0; white-space: nowrap; }
.tabs .active { background: #595959; border-color: #262626; border-radius: 4px 4px 0 0; color: #fff; }
.canvas { position: relative; flex: 1; min-height: 0; background: linear-gradient(#c1c1c1, #c6c6c6 20%, #e2e2e2); }
.sheet { display: block; width: 100%; height: 100%; }
.activebar {
  position: absolute;
  top: 6px;
  left: 50%;
  transform: translateX(-50%);
  display: flex;
  align-items: center;
  height: 56px;
  padding: 0 7px;
  background: #404040;
  border-radius: 10px;
}
.activebar button { position: relative; width: 56px; height: 56px; display: grid; place-items: center; }
.activebar .ico { width: 30px; height: 30px; }
.activebar .sep { width: 4px; height: 30px; }
.more::after { content: ""; position: absolute; right: 3px; bottom: 3px; width: 8px; height: 8px; background: #fff; clip-path: polygon(100% 0, 100% 100%, 0 100%); }
.activebar .letter { font: 700 36px/44px "Liberation Serif", serif; color: #69a3e6; }
.tag { font: 700 14px "Open Sans", sans-serif; fill: #6e5518; }
.sheet-tabs { display: flex; height: 40px; }
.sheet-tabs a { display: flex; align-items: center; padding: 2px 12px 0; border: 2px solid #262626; border-bottom: 0; border-left-width: 0; }
.sheet-tabs .current { background: #4e4e4e; color: #fff; font-weight: 700; }

/* schematic */
.frame { fill: none; stroke: #000; shape-rendering: crispEdges; }
.body { fill: #ffffb0; stroke: #800000; shape-rendering: crispEdges; }
.pin, .wire, .power { fill: none; shape-rendering: crispEdges; }
.pin { stroke: #000; }
.wire { stroke: #000080; }
.power { stroke: #800000; }
.part { fill: none; stroke: #00f; }
.node { fill: #000080; }
.hole { fill: #c0c0c0; stroke: #00f; stroke-width: 6px; }
.t { font: 11px "Liberation Serif", "Times New Roman", serif; fill: #000; }
.navy { fill: #000080; }
.red { fill: #800000; }
.mid { text-anchor: middle; }
.end { text-anchor: end; }

/* status bar */
.status { display: flex; align-items: center; height: 49px; padding-top: 2px; background: #404040; border-bottom: 2px solid #2b2b2b; }
.coords { width: 652px; height: 40px; display: flex; align-items: center; gap: 22px; padding-left: 10px; border-right: 2px solid #333; }
.message { width: 652px; height: 40px; border-right: 2px solid #333; }
.rest { flex: 1; display: flex; justify-content: flex-end; padding-right: 6px; }
.rest .raised { width: 88px; height: 36px; font-size: 20px; }
```
